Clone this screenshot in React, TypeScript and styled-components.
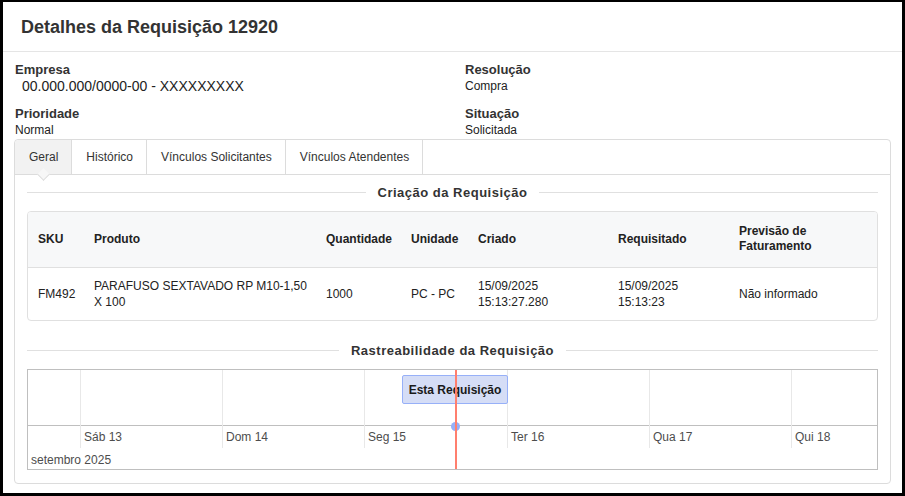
import React from 'react';
import styled, { createGlobalStyle } from 'styled-components';

const GlobalStyle = createGlobalStyle`
  html, body {
    margin: 0;
    padding: 0;
    background: #ffffff;
  }
  body {
    font-family: "Liberation Sans", Arial, sans-serif;
    color: #333;
  }
  * { box-sizing: border-box; }
`;

const Dialog = styled.div`
  width: 905px;
  height: 496px;
  border-style: solid;
  border-color: #000;
  border-width: 2px 3px 3px 3px;
  background: #fff;
  display: flex;
  flex-direction: column;
  overflow: hidden;
`;

const Header = styled.div`
  height: 50px;
  padding: 1px 18px 0;
  display: flex;
  align-items: center;
  border-bottom: 1px solid #e5e5e5;
`;

const Title = styled.h1`
  margin: 0;
  font-size: 18px;
  font-weight: bold;
  color: #333;
`;

const Body = styled.div`
  padding: 10px 11px 0;
`;

const FieldGrid = styled.div`
  display: grid;
  grid-template-columns: 450px 1fr;
  row-gap: 12px;
`;

const Field = styled.div`
  display: flex;
  flex-direction: column;
  padding-left: 1px;
`;

const Label = styled.span`
  font-size: 13px;
  font-weight: bold;
  line-height: 16px;
  color: #333;
`;

const Value = styled.span<{ $big?: boolean }>`
  font-size: ${p => (p.$big ? '14px' : '12px')};
  line-height: 16px;
  color: #222;
  padding-left: ${p => (p.$big ? '7px' : '0')};
`;

const TabsPanel = styled.div`
  margin-top: 1px;
  border: 1px solid #dcdcdc;
  border-radius: 4px;
`;

const TabList = styled.div`
  display: flex;
  height: 35px;
  border-bottom: 1px solid #dcdcdc;
`;

const Tab = styled.div<{ $active?: boolean }>`
  position: relative;
  display: flex;
  align-items: center;
  padding: 0 13px 0 14px;
  font-size: 12px;
  color: #333;
  border-right: 1px solid #dcdcdc;
  background: ${p => (p.$active ? '#f2f2f2' : '#fff')};
  border-top-left-radius: ${p => (p.$active ? '4px' : '0')};

  &::after {
    content: '';
    display: ${p => (p.$active ? 'block' : 'none')};
    position: absolute;
    left: 24px;
    bottom: -5px;
    width: 8px;
    height: 8px;
    background: #f7f7f7;
    border-right: 1px solid #dcdcdc;
    border-bottom: 1px solid #dcdcdc;
    transform: rotate(45deg);
  }
`;

const TabContent = styled.div`
  padding: 9px 12px 13px;
`;

const SectionTitle = styled.div<{ $gap?: number }>`
  display: flex;
  align-items: center;
  gap: 12px;
  height: 16px;
  margin-top: ${p => p.$gap ?? 0}px;
  font-size: 13px;
  font-weight: bold;
  letter-spacing: 0.5px;
  color: #333;

  &::before, &::after {
    content: '';
    flex: 1;
    height: 1px;
    background: #e0e0e0;
  }
`;

const TableBox = styled.div`
  margin-top: 11px;
  border: 1px solid #e0e0e0;
  border-radius: 4px;
  overflow: hidden;
`;

const Table = styled.table`
  width: 100%;
  border-collapse: collapse;
  table-layout: fixed;
  font-size: 12px;
`;

const HeadCell = styled.th<{ $w: number }>`
  width: ${p => p.$w}px;
  height: 55px;
  padding: 0 4px 0 10px;
  text-align: left;
  font-weight: bold;
  line-height: 15px;
  background: #f7f8f9;
  border-bottom: 1px solid #e0e0e0;
  color: #222;
`;

const Cell = styled.td`
  height: 53px;
  padding: 0 4px 0 10px;
  line-height: 16px;
  color: #222;
  vertical-align: middle;
`;

const Timeline = styled.div`
  position: relative;
  margin-top: 11px;
  height: 101px;
  border: 1px solid #bfbfbf;
  overflow: hidden;
`;

const ItemArea = styled.div`
  height: 56px;
  border-bottom: 1px solid #bfbfbf;
`;

const GridLine = styled.div`
  position: absolute;
  top: 0;
  height: 78px;
  width: 1px;
  background: #e8e8e8;
`;

const DayLabel = styled.span`
  position: absolute;
  top: 60px;
  font-size: 12px;
  line-height: 15px;
  color: #4d4d4d;
`;

const MonthLabel = styled.span`
  position: absolute;
  left: 3px;
  top: 83px;
  font-size: 12px;
  line-height: 15px;
  color: #4d4d4d;
`;

const Item = styled.div`
  position: absolute;
  top: 5px;
  height: 29px;
  display: flex;
  align-items: center;
  justify-content: center;
  background: #d5ddf6;
  border: 1px solid #97b0f8;
  border-radius: 2px;
  font-size: 12px;
  font-weight: bold;
  color: #1a1a1a;
`;

const ItemStem = styled.div`
  position: absolute;
  top: 34px;
  height: 22px;
  width: 1px;
  background: #97b0f8;
`;

const ItemDot = styled.div`
  position: absolute;
  top: 52px;
  width: 9px;
  height: 9px;
  border-radius: 50%;
  background: #97b0f8;
`;

const NowLine = styled.div`
  position: absolute;
  top: 0;
  bottom: 0;
  width: 2px;
  background: #ff7f6e;
`;

const tabs = ['Geral', 'Histórico', 'Vínculos Solicitantes', 'Vínculos Atendentes'];

const columns: { title: React.ReactNode; w: number }[] = [
  { title: 'SKU', w: 56 },
  { title: 'Produto', w: 232 },
  { title: 'Quantidade', w: 85 },
  { title: 'Unidade', w: 67 },
  { title: 'Criado', w: 140 },
  { title: 'Requisitado', w: 121 },
  { title: <>Previsão de<br />Faturamento</>, w: 150 },
];

const days = ['Sáb 13', 'Dom 14', 'Seg 15', 'Ter 16', 'Qua 17', 'Qui 18'];

export default function App() {
  return (
    <>
      <GlobalStyle />
      <Dialog>
        <Header>
          <Title>Detalhes da Requisição 12920</Title>
        </Header>
        <Body>
          <FieldGrid>
            <Field>
              <Label>Empresa</Label>
              <Value $big>00.000.000/0000-00 - XXXXXXXXX</Value>
            </Field>
            <Field>
              <Label>Resolução</Label>
              <Value>Compra</Value>
            </Field>
            <Field>
              <Label>Prioridade</Label>
              <Value>Normal</Value>
            </Field>
            <Field>
              <Label>Situação</Label>
              <Value>Solicitada</Value>
            </Field>
          </FieldGrid>

          <TabsPanel>
            <TabList>
              {tabs.map((t, i) => (
                <Tab key={t} $active={i === 0}>{t}</Tab>
              ))}
            </TabList>
            <TabContent>
              <SectionTitle>Criação da Requisição</SectionTitle>
              <TableBox>
                <Table>
                  <thead>
                    <tr>
                      {columns.map((c, i) => (
                        <HeadCell key={i} $w={c.w}>{c.title}</HeadCell>
                      ))}
                    </tr>
                  </thead>
                  <tbody>
                    <tr>
                      <Cell>FM492</Cell>
                      <Cell>PARAFUSO SEXTAVADO RP M10-1,50 X 100</Cell>
                      <Cell>1000</Cell>
                      <Cell>PC - PC</Cell>
                      <Cell>15/09/2025<br />15:13:27.280</Cell>
                      <Cell>15/09/2025<br />15:13:23</Cell>
                      <Cell>Não informado</Cell>
                    </tr>
                  </tbody>
                </Table>
              </TableBox>

              <SectionTitle $gap={21}>Rastreabilidade da Requisição</SectionTitle>
              <Timeline>
                <ItemArea />
                {days.map((d, i) => {
                  const x = Math.round(52 + i * 142.2);
                  return (
                    <React.Fragment key={d}>
                      <GridLine style={{ left: x }} />
                      <DayLabel style={{ left: x + 4 }}>{d}</DayLabel>
                    </React.Fragment>
                  );
                })}
                <MonthLabel>setembro 2025</MonthLabel>
                <Item style={{ left: 374, width: 106 }}>Esta Requisição</Item>
                <ItemStem style={{ left: 427 }} />
                <ItemDot style={{ left: 423 }} />
                <NowLine style={{ left: 427 }} />
              </Timeline>
            </TabContent>
          </TabsPanel>
        </Body>
      </Dialog>
    </>
  );
}
